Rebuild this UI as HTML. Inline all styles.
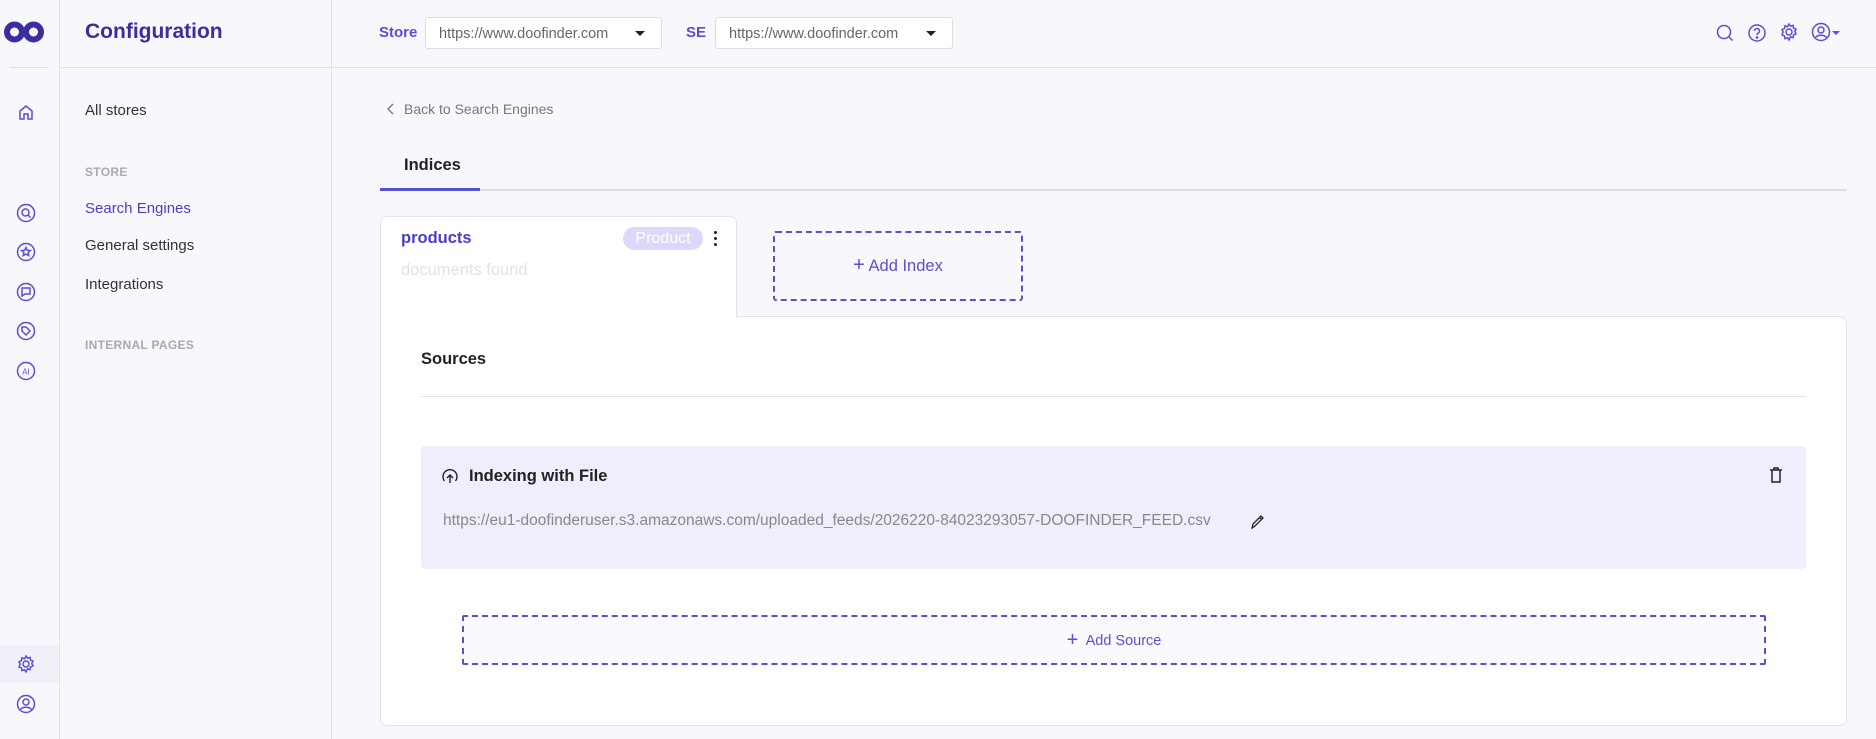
<!DOCTYPE html>
<html><head><meta charset="utf-8"><style>
*{box-sizing:border-box;margin:0;padding:0}
body{width:1876px;height:739px;overflow:hidden;background:#f8f7fc;font-family:"Liberation Sans",sans-serif;position:relative;color:#222}
.a{position:absolute}
.ic{position:absolute;stroke:#5a4fd0;fill:none;stroke-width:1.5}
.nav{position:absolute;left:85px;font-size:15px;color:#333}
.cap{position:absolute;left:85px;font-size:12px;color:#aaa;letter-spacing:.3px;font-weight:bold}
.sel{position:absolute;top:17px;height:32px;background:#fff;border:1px solid #ddd;border-radius:3px;font-size:14.5px;color:#666;padding:8px 13px}
.sel:after{content:"";position:absolute;right:16px;top:13px;border:5px solid transparent;border-top:5px solid #222;border-bottom:0}
</style></head><body>
<!-- rail -->
<div class="a" style="left:0;top:0;width:60px;height:739px;border-right:1px solid #e2e1ea"></div>
<svg class="a" style="left:4px;top:20px" width="40" height="24" viewBox="0 0 40 24"><circle cx="10.5" cy="12" r="7.5" fill="none" stroke="#3a2ea0" stroke-width="6"/><circle cx="29.5" cy="12" r="7.5" fill="none" stroke="#3a2ea0" stroke-width="6"/></svg>
<div class="a" style="left:10px;top:67px;width:38px;height:1px;background:#ddd"></div>
<svg class="ic" style="left:17px;top:103px" width="18" height="18" viewBox="0 0 18 18"><path d="M3 8L9 3l6 5v8h-4v-5H7v5H3z"/></svg>
<svg class="ic" style="left:16px;top:203px" width="20" height="20" viewBox="0 0 20 20"><circle cx="10" cy="10" r="8.5"/><circle cx="9.5" cy="9.5" r="3.5"/><path d="M12 12l2.5 2.5"/></svg>
<svg class="ic" style="left:16px;top:242px" width="20" height="20" viewBox="0 0 20 20"><circle cx="10" cy="10" r="8.5"/><path d="M10 5.5l1.3 2.8 3 .3-2.2 2 .6 3-2.7-1.5-2.7 1.5.6-3-2.2-2 3-.3z"/></svg>
<svg class="ic" style="left:16px;top:282px" width="20" height="20" viewBox="0 0 20 20"><circle cx="10" cy="10" r="8.5"/><path d="M6 6h8v6H9l-3 2z"/></svg>
<svg class="ic" style="left:16px;top:321px" width="20" height="20" viewBox="0 0 20 20"><circle cx="10" cy="10" r="8.5"/><path d="M6 6h4l4 4-4 4-4-4z"/></svg>
<svg class="ic" style="left:16px;top:361px" width="20" height="20" viewBox="0 0 20 20"><circle cx="10" cy="10" r="8.5"/><text x="10" y="13.5" font-size="8" text-anchor="middle" fill="#5a4fd0" stroke="none" font-family="Liberation Sans">AI</text></svg>
<div class="a" style="left:0;top:645px;width:59px;height:38px;background:#f1f0f8"></div>
<svg class="ic" style="left:16px;top:654px" width="20" height="20" viewBox="0 0 20 20"><circle cx="10" cy="10" r="3"/><path d="M10 2l1.5 2.2 2.6-.8.4 2.7 2.5 1-1.2 2.4 1.2 2.4-2.5 1-.4 2.7-2.6-.8L10 18l-1.5-2.2-2.6.8-.4-2.7-2.5-1L4.2 10 3 7.6l2.5-1 .4-2.7 2.6.8z"/></svg>
<svg class="ic" style="left:16px;top:694px" width="20" height="20" viewBox="0 0 20 20"><circle cx="10" cy="10" r="8.5"/><circle cx="10" cy="8" r="3"/><path d="M4.5 15.5c2-3 9-3 11 0"/></svg>
<!-- sidebar -->
<div class="a" style="left:331px;top:0;width:1px;height:739px;background:#e2e1ea"></div>
<div class="a" style="left:60px;top:67px;width:1816px;height:1px;background:#e2e1ea"></div>
<div class="a" style="left:85px;top:20px;font-size:21px;font-weight:bold;color:#3a2ea0">Configuration</div>
<div class="nav" style="top:102px">All stores</div>
<div class="cap" style="top:165px">STORE</div>
<div class="nav" style="top:200px;color:#4a3fc4">Search Engines</div>
<div class="nav" style="top:237px">General settings</div>
<div class="nav" style="top:276px">Integrations</div>
<div class="cap" style="top:338px">INTERNAL PAGES</div>
<!-- header -->
<div class="a" style="left:379px;top:24px;font-size:15px;font-weight:bold;color:#5a4fd0">Store</div>
<div class="sel" style="left:425px;width:237px">https://www.doofinder.com</div>
<div class="a" style="left:686px;top:24px;font-size:15px;font-weight:bold;color:#5a4fd0">SE</div>
<div class="sel" style="left:715px;width:238px">https://www.doofinder.com</div>
<svg class="ic" style="left:1715px;top:23px" width="20" height="20" viewBox="0 0 20 20"><circle cx="9" cy="9" r="6.5"/><path d="M13.5 13.5l4 4"/></svg>
<svg class="ic" style="left:1747px;top:23px" width="20" height="20" viewBox="0 0 20 20"><circle cx="10" cy="10" r="8"/><path d="M7.5 8a2.5 2.5 0 1 1 3.5 2.3c-.7.4-1 .8-1 1.7"/><circle cx="10" cy="14.5" r=".6" fill="#5a4fd0"/></svg>
<svg class="ic" style="left:1779px;top:22px" width="20" height="20" viewBox="0 0 20 20"><circle cx="10" cy="10" r="3"/><path d="M10 2l1.5 2.2 2.6-.8.4 2.7 2.5 1-1.2 2.4 1.2 2.4-2.5 1-.4 2.7-2.6-.8L10 18l-1.5-2.2-2.6.8-.4-2.7-2.5-1L4.2 10 3 7.6l2.5-1 .4-2.7 2.6.8z"/></svg>
<svg class="ic" style="left:1811px;top:22px" width="20" height="20" viewBox="0 0 20 20"><circle cx="10" cy="10" r="8.5"/><circle cx="10" cy="8" r="3"/><path d="M4.5 15.5c2-3 9-3 11 0"/></svg>
<div class="a" style="left:1832px;top:31px;border:4px solid transparent;border-top:4px solid #5a4fd0;border-bottom:0"></div>
<!-- content -->
<svg class="a" style="left:386px;top:102px" width="10" height="14" viewBox="0 0 10 14"><path d="M7 2L2 7l5 5" fill="none" stroke="#777" stroke-width="1.4"/></svg>
<div class="a" style="left:404px;top:101px;font-size:14px;color:#777">Back to Search Engines</div>
<div class="a" style="left:404px;top:156px;font-size:16.5px;font-weight:bold;color:#222">Indices</div>
<div class="a" style="left:380px;top:189px;width:1467px;height:2px;background:#dddde4"></div>
<div class="a" style="left:380px;top:188px;width:100px;height:3px;background:#5a4fd0"></div>
<!-- panel -->
<div class="a" style="left:380px;top:316px;width:1467px;height:410px;background:#fff;border:1px solid #e3e2ea;border-radius:0 7px 7px 7px"></div>
<div class="a" style="left:380px;top:216px;width:357px;height:102px;background:#fff;border:1px solid #e3e2ea;border-bottom:none;border-radius:7px 7px 0 0"></div>
<div class="a" style="left:401px;top:229px;font-size:16.5px;font-weight:bold;color:#4a3fc4">products</div>
<div class="a" style="left:623px;top:227px;width:80px;height:23px;border-radius:12px;background:#dcd8fb;color:#fff;font-size:16px;text-align:center;line-height:23px">Product</div>
<div class="a" style="left:714px;top:231px;width:3px;height:3px;border-radius:2px;background:#222;box-shadow:0 6px 0 #222,0 12px 0 #222"></div>
<div class="a" style="left:401px;top:261px;font-size:16.5px;color:#e2e2e6">documents found</div>
<div class="a" style="left:773px;top:231px;width:250px;height:70px;border:2px dashed #5a4fd0;border-radius:3px;color:#5a4fd0;font-size:16.5px;text-align:center;line-height:64px"><span style="font-size:20px">+</span> Add Index</div>
<div class="a" style="left:421px;top:350px;font-size:16.5px;font-weight:bold;color:#222">Sources</div>
<div class="a" style="left:421px;top:396px;width:1385px;height:1px;background:#e3e3e8"></div>
<div class="a" style="left:421px;top:446px;width:1385px;height:123px;background:#efeefc;border-radius:4px"></div>
<svg class="a" style="left:441px;top:467px" width="18" height="18" viewBox="0 0 18 18"><path d="M3.5 14a7 7 0 1 1 11 0M9 16V8M6 11l3-3 3 3" fill="none" stroke="#222" stroke-width="1.4"/></svg>
<div class="a" style="left:469px;top:467px;font-size:16.5px;font-weight:bold;color:#222">Indexing with File</div>
<svg class="a" style="left:1768px;top:466px" width="16" height="18" viewBox="0 0 16 18"><path d="M2 4h12M6 4V2h4v2M4 4v12h8V4" fill="none" stroke="#222" stroke-width="1.5"/></svg>
<div class="a" style="left:443px;top:512px;font-size:15.5px;color:#888">https://eu1-doofinderuser.s3.amazonaws.com/uploaded_feeds/2026220-84023293057-DOOFINDER_FEED.csv</div>
<svg class="a" style="left:1249px;top:513px" width="16" height="18" viewBox="0 0 16 18"><path d="M3 15l1-4 8-8 2 2-8 8zM10.5 4.5l2 2" fill="none" stroke="#222" stroke-width="1.3"/></svg>
<div class="a" style="left:462px;top:615px;width:1304px;height:50px;border:2px dashed #5a4fd0;border-radius:2px;background:#fafafe;color:#5a4fd0;font-size:14.5px;text-align:center;line-height:46px"><span style="font-size:20px;vertical-align:-1px">+</span>&nbsp; Add Source</div>
</body></html>
